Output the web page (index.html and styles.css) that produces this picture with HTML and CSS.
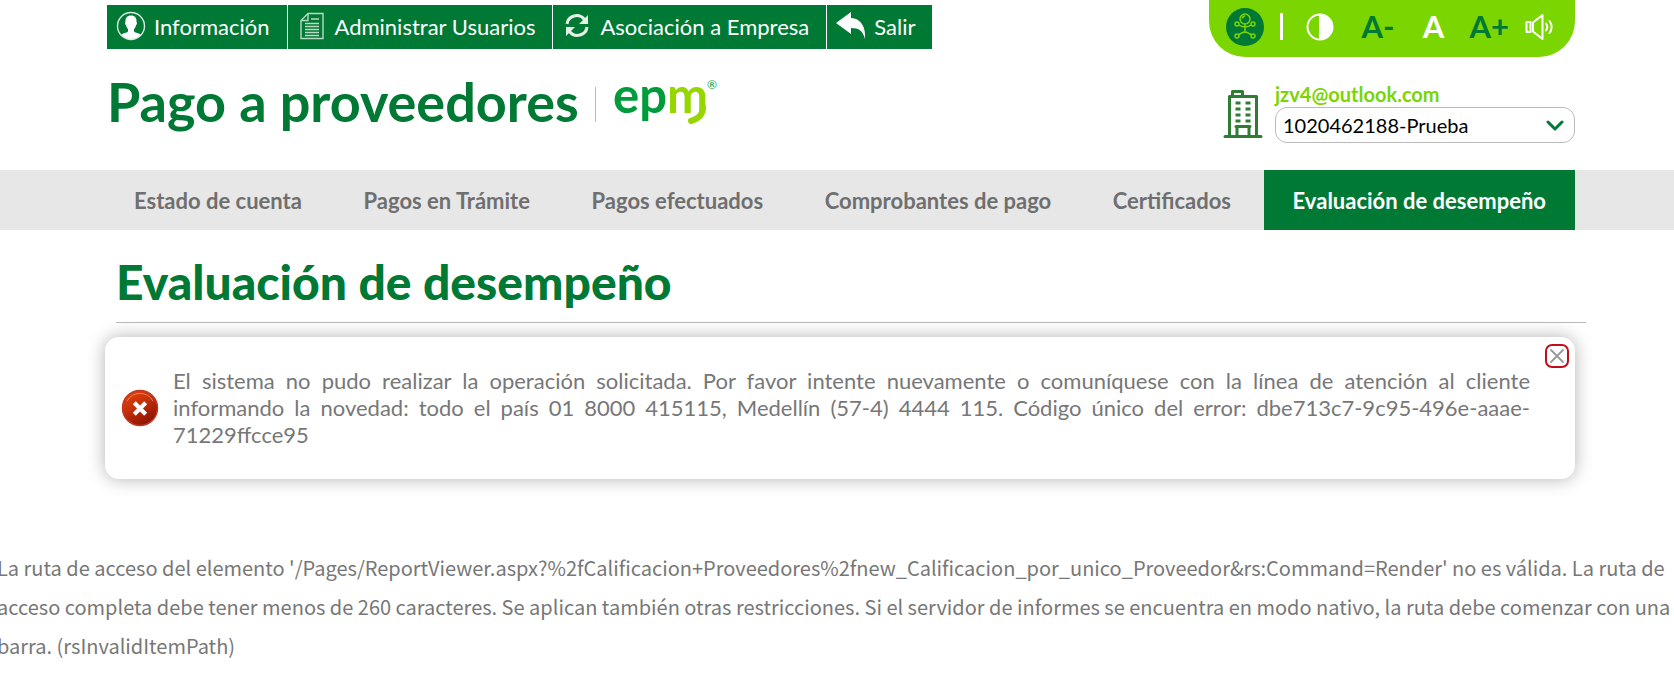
FILE: index.html
```html
<!DOCTYPE html>
<html lang="es">
<head>
<meta charset="utf-8">
<title>Pago a proveedores - Evaluación de desempeño</title>
<link rel="stylesheet" href="styles.css">
</head>
<body>
<header class="header wrap">
  <div class="header-main">
    <nav class="quick" aria-label="Accesos">
      <a href="#" class="quick-link">
        <svg width="30" height="30" viewBox="0 0 30 30"><circle cx="15" cy="15" r="13.5" fill="none" stroke="#fff" stroke-opacity=".85" stroke-width="1.4"/><path fill="#fff" d="M15 4.500c-4 0-5.800 2.600-5.500 6.500-.8.400-.5 2.600.5 3.200.4 2 1.200 3 2 3.800v2.500c-1.500 1.500-5 1.700-6.800 3.200C8 26.500 11 28 15 28s7-1.500 9.800-4.300c-1.800-1.500-5.300-1.700-6.800-3.200V18c.8-.8 1.600-1.800 2-3.800 1-.6 1.300-2.800.5-3.200.3-3.900-1.500-6.500-5.500-6.500z"/></svg>
        <span>Información</span>
      </a>
      <a href="#" class="quick-link">
        <svg width="30" height="30" viewBox="0 0 30 30" fill="none" stroke="#b9d9c4" stroke-width="1.400"><path d="M11 2.500h15v25H4V9.500z"/><path d="M11 2.500v7H4M14 8h8M8 12.500h14M8 15.500h14M8 18.500h14M8 21.500h14M8 24.500h14"/></svg>
        <span>Administrar Usuarios</span>
      </a>
      <a href="#" class="quick-link">
        <svg width="30" height="30" viewBox="0 0 30 30"><g fill="none" stroke="#e3f1e7" stroke-width="3"><path d="M5 13C6 4.500 17 1.500 22.500 8.500"/><path d="M25 16C24 24.500 13 27.500 7.500 20.500"/></g><path fill="#e3f1e7" d="M26 4v9h-9zM4 25v-9h9z"/></svg>
        <span>Asociación a Empresa</span>
      </a>
      <a href="#" class="quick-link">
        <svg width="30" height="30" viewBox="0 0 30 30"><path fill="#fff" d="M0 12L15 1v6c10 .5 15 9 14 21-2-8-6-11-14-11v6z"/></svg>
        <span>Salir</span>
      </a>
    </nav>
    <div class="brand">
      <span class="brand-name">Pago a proveedores</span>
      <svg class="logo" width="106" height="50" viewBox="0 0 106 50" role="img" aria-label="epm">
        <text class="logo-word" x="0" y="36"><tspan fill="#009b3a">ep</tspan><tspan fill="#97d700">m</tspan></text>
        <path d="M90 30c0 8-5 12-12 14" fill="none" stroke="#97d700" stroke-width="6" stroke-linecap="round"/>
        <text class="logo-reg" x="94" y="12" fill="#009b3a">®</text>
      </svg>
    </div>
  </div>
  <div class="header-side">
    <div class="tools">
      <button type="button" class="tool" aria-label="Centro de relevo">
        <svg width="38" height="38" viewBox="0 0 38 38"><circle cx="19" cy="19" r="19" fill="#007934"/><g fill="none" stroke="#7bd500" stroke-width="1.500"><circle cx="19" cy="11" r="5"/><path d="M16.500 10.500a2.500 2.500 0 0 1 2.500-2.500M19 16v9M13 17c3 2.500 9 2.500 12 0M12.500 26.500c3-.5 3.500-2.500 6.500-2.500s3.500 2 6.500 2.500"/><circle cx="11" cy="16" r="2"/><circle cx="27" cy="16" r="2"/><circle cx="11" cy="28" r="2"/><circle cx="27" cy="28" r="2"/></g></svg>
      </button>
      <span class="tools-bar"></span>
      <button type="button" class="tool tool-contrast" aria-label="Contraste">
        <svg width="28" height="28" viewBox="0 0 28 28"><circle cx="14" cy="14" r="12.500" fill="none" stroke="#fff" stroke-width="2"/><path fill="#fff" d="M13 1a13 13 0 0 1 0 26z"/></svg>
      </button>
      <button type="button" class="tool tool-text">A-</button>
      <button type="button" class="tool tool-text tool-light">A</button>
      <button type="button" class="tool tool-text">A+</button>
      <button type="button" class="tool" aria-label="Leer en voz alta">
        <svg width="28" height="28" viewBox="0 0 28 28" fill="none" stroke="#fff" stroke-width="2" stroke-linejoin="round" stroke-linecap="round"><rect x="1.500" y="9" width="4" height="10"/><path d="M8 9.500L17.500 2v24L8 18.500zM21 10.500c1.500 2 1.500 5 0 7M24.500 8c2.800 3.500 2.800 8.500 0 12"/></svg>
      </button>
    </div>
    <div class="account">
      <svg width="40" height="50" viewBox="0 0 40 50" fill="none" stroke="#2e7d32" stroke-width="3" stroke-linejoin="round" stroke-linecap="round"><path d="M2 47.500h36M6.500 47V7.500h27V47M9.500 7V2.500h10V7M14 47v-9.500h12V47M13 37.500h14"/><path stroke-linecap="butt" stroke-dasharray="5 5" d="M12.500 14h15M12.500 20h15M12.500 26h15M12.500 32h15"/></svg>
      <div class="account-data">
        <label class="email" for="company">jzv4@outlook.com</label>
        <div class="select-box">
          <select id="company"><option>1020462188-Prueba</option></select>
          <svg class="chevron" width="18" height="12" viewBox="0 0 18 12"><path d="M2 2l7 7 7-7" fill="none" stroke="#007934" stroke-width="3" stroke-linecap="round" stroke-linejoin="round"/></svg>
        </div>
      </div>
    </div>
  </div>
</header>
<nav class="menu" aria-label="Principal">
  <div class="menu-list wrap">
    <a href="#">Estado de cuenta</a>
    <a href="#">Pagos en Trámite</a>
    <a href="#">Pagos efectuados</a>
    <a href="#">Comprobantes de pago</a>
    <a href="#">Certificados</a>
    <a href="#" class="active" aria-current="page">Evaluación de desempeño</a>
  </div>
</nav>
<main>
  <div class="title-row"><h1>Evaluación de desempeño</h1></div>
  <div class="wrap">
    <section class="alert" role="alert">
      <svg class="alert-icon" width="38" height="38" viewBox="0 0 38 38"><defs><linearGradient id="red" x1="0" y1="0" x2=".6" y2="1"><stop offset="0" stop-color="#e8470c"/><stop offset=".5" stop-color="#c5300a"/><stop offset="1" stop-color="#8c1503"/></linearGradient></defs><circle cx="19" cy="19" r="17.500" fill="url(#red)" stroke="#bf3a26" stroke-width="1.500"/><path d="M6 12a15 15 0 0 1 26 0" fill="none" stroke="#ee8058" stroke-width="1"/><path d="M14 14.500l10 10M24 14.500l-10 10" stroke="#fff" stroke-width="5" stroke-linecap="square" transform="translate(3 3.100) scale(.84)"/></svg>
      <p>El sistema no pudo realizar la operación solicitada. Por favor intente nuevamente o comuníquese con la línea de atención al cliente informando la novedad: todo el país 01 8000 415115, Medellín (57-4) 4444 115. Código único del error: dbe713c7-9c95-496e-aaae-71229ffcce95</p>
      <button type="button" class="close" aria-label="Cerrar">
        <svg width="16" height="16" viewBox="0 0 16 16"><path d="M2 2l12 12M14 2L2 14" stroke="#999" stroke-width="1.800" stroke-linecap="round"/></svg>
      </button>
    </section>
  </div>
  <p class="report-error">La ruta de acceso del elemento '/Pages/ReportViewer.aspx?%2fCalificacion+Proveedores%2fnew_Calificacion_por_unico_Proveedor&amp;rs:Command=Render' no es válida. La ruta de acceso completa debe tener menos de 260 caracteres. Se aplican también otras restricciones. Si el servidor de informes se encuentra en modo nativo, la ruta debe comenzar con una barra. (rsInvalidItemPath)</p>
</main>
</body>
</html>
```

FILE: styles.css
```css
* { box-sizing: border-box; }
body {
  margin: 0;
  background: #fff;
  color: #777;
  font: 22px/27px Lato, "Open Sans", sans-serif;
  overflow-x: hidden;
}
a { color: inherit; text-decoration: none; }
button { padding: 0; border: 0; background: none; font: inherit; cursor: pointer; }
svg { display: block; flex: none; }

.wrap { padding-left: 105px; padding-right: 99px; }

.header {
  display: flex;
  justify-content: space-between;
  align-items: flex-start;
  padding-bottom: 27px;
}
.header-main { padding: 5px 0 0 2px; }

.quick { display: flex; gap: 1px; }
.quick-link {
  display: flex;
  align-items: center;
  gap: 8px;
  height: 44px;
  padding: 0 17px 2px 9px;
  background: #007934;
  color: #fff;
  white-space: nowrap;
}

.brand { display: flex; align-items: center; margin-top: 23px; }
.brand-name {
  color: #007934;
  font-size: 54px;
  font-weight: 700;
  line-height: 60px;
}
.brand-name::after {
  content: "";
  display: inline-block;
  height: 35px;
  margin: 0 17px 0 16px;
  border-left: 1px solid #bbb;
}
.logo { overflow: visible; }
.logo-word { font: 700 49px Lato, sans-serif; }
.logo-reg { font: 12px Lato, sans-serif; }

.header-side { width: 366px; }
.tools {
  display: flex;
  align-items: center;
  justify-content: space-between;
  height: 57px;
  padding: 0 22px 4px 17px;
  border-radius: 0 0 36px 36px;
  background: #7bd500;
}
.tools-bar { width: 3px; height: 27px; background: #fff; }
.tool-contrast { padding: 0 8px; }
.tool-text { width: 40px; color: #007934; font-size: 31px; font-weight: 700; white-space: nowrap; }
.tool-light { color: #fff; }

.account { display: flex; align-items: flex-start; gap: 12px; padding: 24px 0 0 14px; }
.account svg { margin-top: 8px; }
.account-data { flex: 1; }
.email { display: block; color: #7bd500; font-size: 20px; font-weight: 700; line-height: 26px; }
.select-box { position: relative; }
.select-box select {
  display: block;
  width: 100%;
  height: 36px;
  padding: 0 40px 0 7px;
  border: 1px solid #bbb;
  border-radius: 12px;
  appearance: none;
  background: #fff;
  color: #000;
  font: 20px Lato, sans-serif;
}
.select-box .chevron { position: absolute; right: 11px; top: 5px; pointer-events: none; }

.menu { background: #e7e7e7; }
.menu-list { display: flex; justify-content: space-between; }
.menu-list a {
  padding: 2px 29px 0;
  color: #6f6f6f;
  font-weight: 700;
  line-height: 58px;
  white-space: nowrap;
}
.menu-list .active { background: #007934; color: #fff; }

.title-row { margin: 0 88px 14px 116px; border-bottom: 1px solid #bbb; }
h1 {
  margin: 0;
  padding: 27px 0 16px;
  color: #007934;
  font-size: 48px;
  font-weight: 900;
  line-height: 49px;
}

.alert {
  position: relative;
  display: flex;
  align-items: center;
  gap: 14px;
  padding: 30px 45px 31px 16px;
  border-radius: 14px;
  background: #fff;
  box-shadow: 0 0 18px rgba(0, 0, 0, .3);
}
.alert p { margin: 0; text-align: justify; }
.close {
  position: absolute;
  top: 7px;
  right: 6px;
  display: grid;
  place-items: center;
  width: 24px;
  height: 24px;
  border: 2px solid #c10f1a;
  border-radius: 7px;
}

.report-error {
  margin: 69px 0 0 -3px;
  font: 20px/39px "Noto Sans CJK SC", sans-serif;
}
```
